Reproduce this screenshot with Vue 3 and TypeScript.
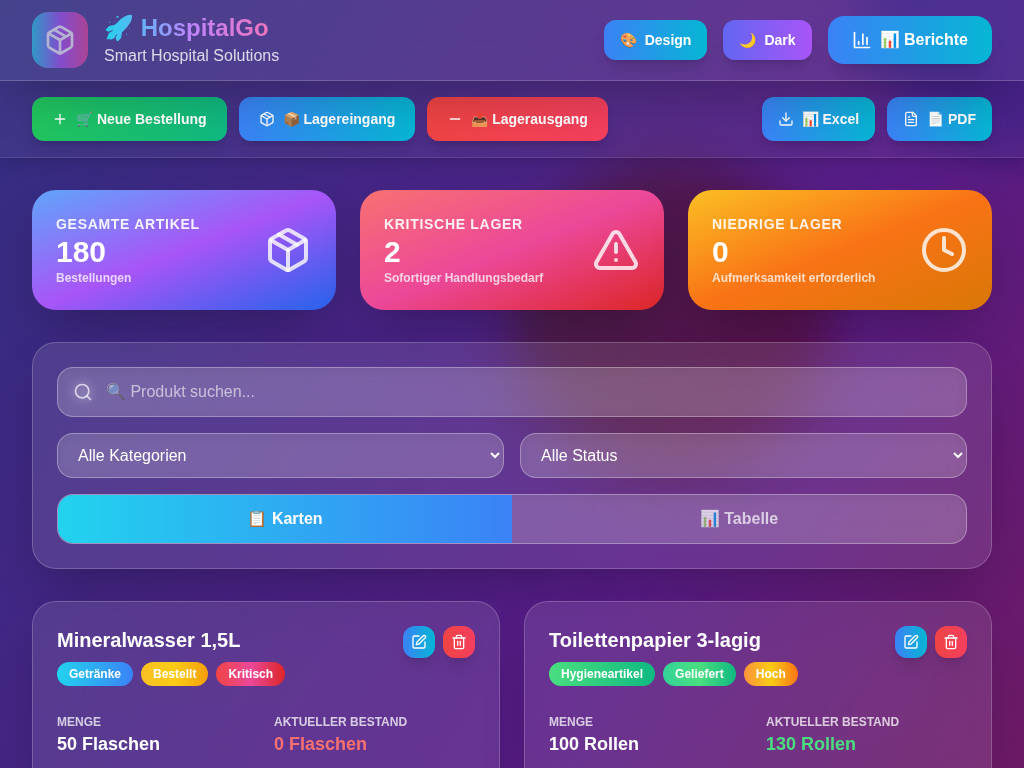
<script setup lang="ts">
import { ref } from 'vue'

type IconName = 'package' | 'plus' | 'minus' | 'chart' | 'download' | 'file' | 'alert' | 'clock' | 'search' | 'edit' | 'trash'

const icons: Record<IconName, string[]> = {
  package: [
    'm7.5 4.27 9 5.15',
    'M21 8a2 2 0 0 0-1-1.73l-7-4a2 2 0 0 0-2 0l-7 4A2 2 0 0 0 3 8v8a2 2 0 0 0 1 1.73l7 4a2 2 0 0 0 2 0l7-4A2 2 0 0 0 21 16Z',
    'm3.3 7 8.7 5 8.7-5',
    'M12 22V12',
  ],
  plus: ['M5 12h14', 'M12 5v14'],
  minus: ['M5 12h14'],
  chart: ['M3 3v18h18', 'M18 17V9', 'M13 17V5', 'M8 17v-3'],
  download: ['M21 15v4a2 2 0 0 1-2 2H5a2 2 0 0 1-2-2v-4', 'M7 10l5 5 5-5', 'M12 15V3'],
  file: ['M15 2H6a2 2 0 0 0-2 2v16a2 2 0 0 0 2 2h12a2 2 0 0 0 2-2V7Z', 'M14 2v4a2 2 0 0 0 2 2h4', 'M10 9H8', 'M16 13H8', 'M16 17H8'],
  alert: ['m21.73 18-8-14a2 2 0 0 0-3.48 0l-8 14A2 2 0 0 0 4 21h16a2 2 0 0 0 1.73-3Z', 'M12 9v4', 'M12 17h.01'],
  clock: ['M22 12a10 10 0 1 1-20 0 10 10 0 0 1 20 0z', 'M12 6v6l4 2'],
  search: ['M19 11a8 8 0 1 1-16 0 8 8 0 0 1 16 0z', 'm21 21-4.3-4.3'],
  edit: ['M12 3H5a2 2 0 0 0-2 2v14a2 2 0 0 0 2 2h14a2 2 0 0 0 2-2v-7', 'M18.375 2.625a2.121 2.121 0 1 1 3 3L12 15l-4 1 1-4Z'],
  trash: ['M3 6h18', 'M19 6v14c0 1-1 2-2 2H7c-1 0-2-1-2-2V6', 'M8 6V4c0-1 1-2 2-2h4c1 0 2 1 2 2v2', 'M10 11v6', 'M14 11v6'],
}

const stats: { tone: string; label: string; value: number; note: string; icon: IconName }[] = [
  { tone: 'total', label: 'Gesamte Artikel', value: 180, note: 'Bestellungen', icon: 'package' },
  { tone: 'critical', label: 'Kritische Lager', value: 2, note: 'Sofortiger Handlungsbedarf', icon: 'alert' },
  { tone: 'low', label: 'Niedrige Lager', value: 0, note: 'Aufmerksamkeit erforderlich', icon: 'clock' },
]

const orderActions: { tone: string; icon: IconName; text: string }[] = [
  { tone: 'green', icon: 'plus', text: '🛒 Neue Bestellung' },
  { tone: 'cyan', icon: 'package', text: '📦 Lagereingang' },
  { tone: 'coral', icon: 'minus', text: '📤 Lagerausgang' },
]
const exportActions: { icon: IconName; text: string }[] = [
  { icon: 'download', text: '📊 Excel' },
  { icon: 'file', text: '📄 PDF' },
]

const products = [
  {
    name: 'Mineralwasser 1,5L',
    tags: [
      { text: 'Getränke', tone: 'drinks' },
      { text: 'Bestellt', tone: 'ordered' },
      { text: 'Kritisch', tone: 'urgent' },
    ],
    amount: '50 Flaschen',
    stock: '0 Flaschen',
    stockTone: 'empty',
  },
  {
    name: 'Toilettenpapier 3-lagig',
    tags: [
      { text: 'Hygieneartikel', tone: 'hygiene' },
      { text: 'Geliefert', tone: 'delivered' },
      { text: 'Hoch', tone: 'high' },
    ],
    amount: '100 Rollen',
    stock: '130 Rollen',
    stockTone: 'good',
  },
]

const query = ref('')
const category = ref('all')
const status = ref('all')
const view = ref<'cards' | 'table'>('cards')
</script>

<template>
  <div class="page">
    <div class="glow" aria-hidden="true">
      <span class="blob blob-corner"></span>
      <span class="blob blob-centre"></span>
    </div>

    <header class="topbar">
      <div class="brand">
        <div class="logo">
          <svg class="icon i32" viewBox="0 0 24 24"><path v-for="d in icons.package" :key="d" :d="d" /></svg>
        </div>
        <div>
          <h1>🚀 HospitalGo</h1>
          <p>Smart Hospital Solutions</p>
        </div>
      </div>
      <div class="top-actions">
        <button type="button" class="btn small cyan"><span>🎨</span><span>Design</span></button>
        <button type="button" class="btn small violet"><span>🌙</span><span>Dark</span></button>
        <button type="button" class="btn large cyan">
          <svg class="icon i20" viewBox="0 0 24 24"><path v-for="d in icons.chart" :key="d" :d="d" /></svg>
          <span>📊 Berichte</span>
        </button>
      </div>
    </header>

    <nav class="toolbar" aria-label="Aktionen">
      <div class="group">
        <button v-for="a in orderActions" :key="a.text" type="button" class="btn wide" :class="a.tone">
          <svg class="icon i16" viewBox="0 0 24 24"><path v-for="d in icons[a.icon]" :key="d" :d="d" /></svg>
          <span>{{ a.text }}</span>
        </button>
      </div>
      <div class="group">
        <button v-for="a in exportActions" :key="a.text" type="button" class="btn medium cyan">
          <svg class="icon i16" viewBox="0 0 24 24"><path v-for="d in icons[a.icon]" :key="d" :d="d" /></svg>
          <span>{{ a.text }}</span>
        </button>
      </div>
    </nav>

    <main>
      <section class="stats">
        <article v-for="s in stats" :key="s.label" class="stat" :class="s.tone">
          <div>
            <h2>{{ s.label }}</h2>
            <p class="value">{{ s.value }}</p>
            <p class="note">{{ s.note }}</p>
          </div>
          <svg class="icon i48" viewBox="0 0 24 24"><path v-for="d in icons[s.icon]" :key="d" :d="d" /></svg>
        </article>
      </section>

      <section class="glass filters">
        <div class="search">
          <svg class="icon i20" viewBox="0 0 24 24"><path v-for="d in icons.search" :key="d" :d="d" /></svg>
          <input v-model="query" type="text" class="field" aria-label="Produkt suchen" placeholder="🔍 Produkt suchen..." />
        </div>
        <div class="selects">
          <select v-model="category" class="field" aria-label="Kategorie">
            <option value="all">Alle Kategorien</option>
            <option value="drinks">Getränke</option>
            <option value="hygiene">Hygieneartikel</option>
          </select>
          <select v-model="status" class="field" aria-label="Status">
            <option value="all">Alle Status</option>
            <option value="ordered">Bestellt</option>
            <option value="delivered">Geliefert</option>
          </select>
        </div>
        <div class="field switch">
          <button type="button" :class="{ active: view === 'cards' }" @click="view = 'cards'">📋 Karten</button>
          <button type="button" :class="{ active: view === 'table' }" @click="view = 'table'">📊 Tabelle</button>
        </div>
      </section>

      <section class="products">
        <article v-for="p in products" :key="p.name" class="glass product">
          <div class="product-head">
            <div>
              <h3>{{ p.name }}</h3>
              <div class="tags">
                <span v-for="t in p.tags" :key="t.text" class="tag" :class="t.tone">{{ t.text }}</span>
              </div>
            </div>
            <div class="tools">
              <button type="button" class="btn square cyan" aria-label="Bearbeiten">
                <svg class="icon i16" viewBox="0 0 24 24"><path v-for="d in icons.edit" :key="d" :d="d" /></svg>
              </button>
              <button type="button" class="btn square coral" aria-label="Löschen">
                <svg class="icon i16" viewBox="0 0 24 24"><path v-for="d in icons.trash" :key="d" :d="d" /></svg>
              </button>
            </div>
          </div>
          <dl>
            <div>
              <dt>Menge</dt>
              <dd>{{ p.amount }}</dd>
            </div>
            <div>
              <dt>Aktueller Bestand</dt>
              <dd :class="p.stockTone">{{ p.stock }}</dd>
            </div>
          </dl>
        </article>
      </section>
    </main>
  </div>
</template>

<style>
body {
  margin: 0;
  background: #312e81;
}
</style>

<style scoped>
* {
  box-sizing: border-box;
}
.page {
  position: relative;
  min-height: 100vh;
  color: #fff;
  font: 16px/24px "Liberation Sans", Arial, "Noto Sans", sans-serif;
  background: linear-gradient(to bottom right, #312e81, #581c87, #831843) 0 0 / 100% 200vh;
}
h1, h2, h3, p, dl, dd {
  margin: 0;
}
button, input, select {
  font: inherit;
  color: inherit;
}
.glow {
  position: absolute;
  inset: 0;
  overflow: hidden;
}
.blob {
  position: absolute;
  width: 320px;
  height: 320px;
  border-radius: 50%;
  filter: blur(24px);
  mix-blend-mode: multiply;
  opacity: 0.7;
}
.blob-corner {
  top: -160px;
  right: -160px;
  background: linear-gradient(to right, #7dc0fc, #a0c8ff);
}
.blob-centre {
  top: 160px;
  left: 50%;
  background: linear-gradient(to right, #facc60, #f47266);
}

.icon {
  flex: none;
  fill: none;
  stroke: currentColor;
  stroke-width: 2;
  stroke-linecap: round;
  stroke-linejoin: round;
}
.i16 { width: 16px; height: 16px; }
.i20 { width: 20px; height: 20px; }
.i32 { width: 32px; height: 32px; }
.i48 { width: 48px; height: 48px; }

.topbar {
  position: relative;
  z-index: 3;
  display: flex;
  align-items: center;
  justify-content: space-between;
  padding: 12px 32px;
  background: rgba(255, 255, 255, 0.1);
  border-bottom: 1px solid rgba(255, 255, 255, 0.2);
  box-shadow: 0 25px 50px -12px rgba(0, 0, 0, 0.25);
  backdrop-filter: blur(24px);
}
.brand {
  display: flex;
  align-items: center;
  gap: 16px;
}
.logo {
  display: grid;
  place-items: center;
  width: 56px;
  height: 56px;
  border-radius: 16px;
  background: linear-gradient(to right, #22d3ee, #a855f7, #ec4899);
  opacity: 0.6;
}
h1 {
  font-size: 24px;
  line-height: 32px;
  color: transparent;
  background: linear-gradient(to right, #22d3ee, #c084fc, #f472b6);
  background-clip: text;
}
.brand p {
  color: rgba(255, 255, 255, 0.8);
}
.top-actions {
  display: flex;
  align-items: center;
  gap: 16px;
}

.btn {
  display: flex;
  align-items: center;
  justify-content: center;
  gap: 8px;
  border: 0;
  border-radius: 12px;
  font-size: 14px;
  line-height: 20px;
  font-weight: 700;
  cursor: pointer;
  box-shadow: 0 10px 15px -3px rgba(0, 0, 0, 0.12), 0 4px 6px -4px rgba(0, 0, 0, 0.12);
}
.small { padding: 10px 16px; }
.medium { padding: 12px 16px; }
.wide { padding: 12px 20px; }
.large {
  padding: 12px 24px;
  border-radius: 16px;
  font-size: 16px;
  line-height: 24px;
  box-shadow: 0 20px 25px -5px rgba(0, 0, 0, 0.1), 0 8px 10px -6px rgba(0, 0, 0, 0.1);
}
.square {
  width: 32px;
  height: 32px;
  padding: 0;
}
.cyan { background: linear-gradient(to right, #3b82f6, #06b6d4); }
.violet { background: linear-gradient(to right, #6366f1, #a855f7); }
.coral { background: linear-gradient(to right, #ef4444, #f43f5e); }
.green { background: linear-gradient(to right, #22c55e, #10b981); }

.toolbar {
  position: relative;
  z-index: 2;
  display: flex;
  justify-content: space-between;
  padding: 16px 32px;
  background: rgba(255, 255, 255, 0.05);
  border-bottom: 1px solid rgba(255, 255, 255, 0.1);
  box-shadow: 0 10px 15px -3px rgba(0, 0, 0, 0.1), 0 4px 6px -4px rgba(0, 0, 0, 0.1);
  backdrop-filter: blur(16px);
}
.group {
  display: flex;
  gap: 12px;
}

main {
  position: relative;
  display: grid;
  gap: 32px;
  padding: 32px;
}
.stats {
  display: grid;
  grid-template-columns: repeat(3, 1fr);
  gap: 24px;
}
.stat {
  display: flex;
  align-items: center;
  justify-content: space-between;
  padding: 24px;
  border-radius: 24px;
  box-shadow: 0 25px 50px -12px rgba(0, 0, 0, 0.25);
}
.total { background: linear-gradient(to bottom right, #60a5fa, #a855f7, #2563eb); }
.critical { background: linear-gradient(to bottom right, #f87171, #ec4899, #dc2626); }
.low { background: linear-gradient(to bottom right, #fbbf24, #f97316, #d97706); }
.stat h2 {
  font-size: 14px;
  line-height: 20px;
  letter-spacing: 0.05em;
  text-transform: uppercase;
  color: rgba(255, 255, 255, 0.9);
}
.value {
  font-size: 30px;
  line-height: 36px;
  font-weight: 700;
}
.note {
  font-size: 12px;
  line-height: 16px;
  font-weight: 700;
  color: rgba(255, 255, 255, 0.75);
}
.stat .icon {
  color: rgba(255, 255, 255, 0.8);
}

.glass {
  border: 1px solid rgba(255, 255, 255, 0.2);
  border-radius: 24px;
  padding: 24px;
  background: rgba(255, 255, 255, 0.1);
  box-shadow: 0 25px 50px -12px rgba(0, 0, 0, 0.25);
  backdrop-filter: blur(24px);
}
.filters {
  display: grid;
  gap: 16px;
}
.field {
  width: 100%;
  border: 1px solid rgba(255, 255, 255, 0.3);
  border-radius: 16px;
  background: rgba(255, 255, 255, 0.2);
  box-shadow: inset 0 2px 12px rgba(0, 0, 0, 0.06);
}
.search {
  position: relative;
}
.search .icon {
  position: absolute;
  left: 16px;
  top: 15px;
  color: rgba(255, 255, 255, 0.7);
  overflow: visible;
  filter: drop-shadow(0 0 4px rgba(255, 255, 255, 0.5)) drop-shadow(0 0 6px rgba(255, 255, 255, 0.4));
}
.search input {
  display: block;
  height: 50px;
  padding: 12px 16px 12px 48px;
}
.search input::placeholder {
  color: rgba(255, 255, 255, 0.6);
}
.selects {
  display: grid;
  grid-template-columns: 1fr 1fr;
  gap: 16px;
}
.selects select {
  height: 45px;
  padding: 0 0 0 16px;
}
option {
  color: #1f2937;
}
.switch {
  display: grid;
  grid-template-columns: 1fr 1fr;
  overflow: hidden;
}
.switch button {
  border: 0;
  padding: 12px 24px;
  background: transparent;
  font-weight: 700;
  color: rgba(255, 255, 255, 0.7);
  cursor: pointer;
}
.switch .active {
  color: #fff;
  background: linear-gradient(to right, #22d3ee, #3b82f6);
}

.products {
  display: grid;
  grid-template-columns: 1fr 1fr;
  gap: 24px;
}
.product {
  padding-bottom: 64px;
}
.product-head {
  display: flex;
  align-items: flex-start;
  justify-content: space-between;
}
h3 {
  margin-bottom: 8px;
  font-size: 20px;
  line-height: 28px;
}
.tags, .tools {
  display: flex;
  gap: 8px;
}
.tag {
  padding: 4px 12px;
  border-radius: 12px;
  font-size: 12px;
  line-height: 16px;
  font-weight: 700;
}
.drinks { background: linear-gradient(to right, #22d3ee, #3b82f6); }
.ordered { background: linear-gradient(to right, #fbbf24, #facc15, #f59e0b); }
.urgent { background: linear-gradient(to right, #ef4444, #ec4899, #dc2626); }
.hygiene { background: linear-gradient(to right, #4ade80, #10b981); }
.delivered { background: linear-gradient(to right, #34d399, #4ade80, #10b981); }
.high { background: linear-gradient(to right, #fb923c, #facc15, #f97316); }
dl {
  display: grid;
  grid-template-columns: 1fr 1fr;
  gap: 16px;
  margin-top: 28px;
}
dt {
  font-size: 12px;
  line-height: 16px;
  font-weight: 700;
  text-transform: uppercase;
  color: rgba(255, 255, 255, 0.75);
}
dd {
  font-size: 18px;
  line-height: 28px;
  font-weight: 700;
}
.empty { color: #f87171; }
.good { color: #4ade80; }
</style>
